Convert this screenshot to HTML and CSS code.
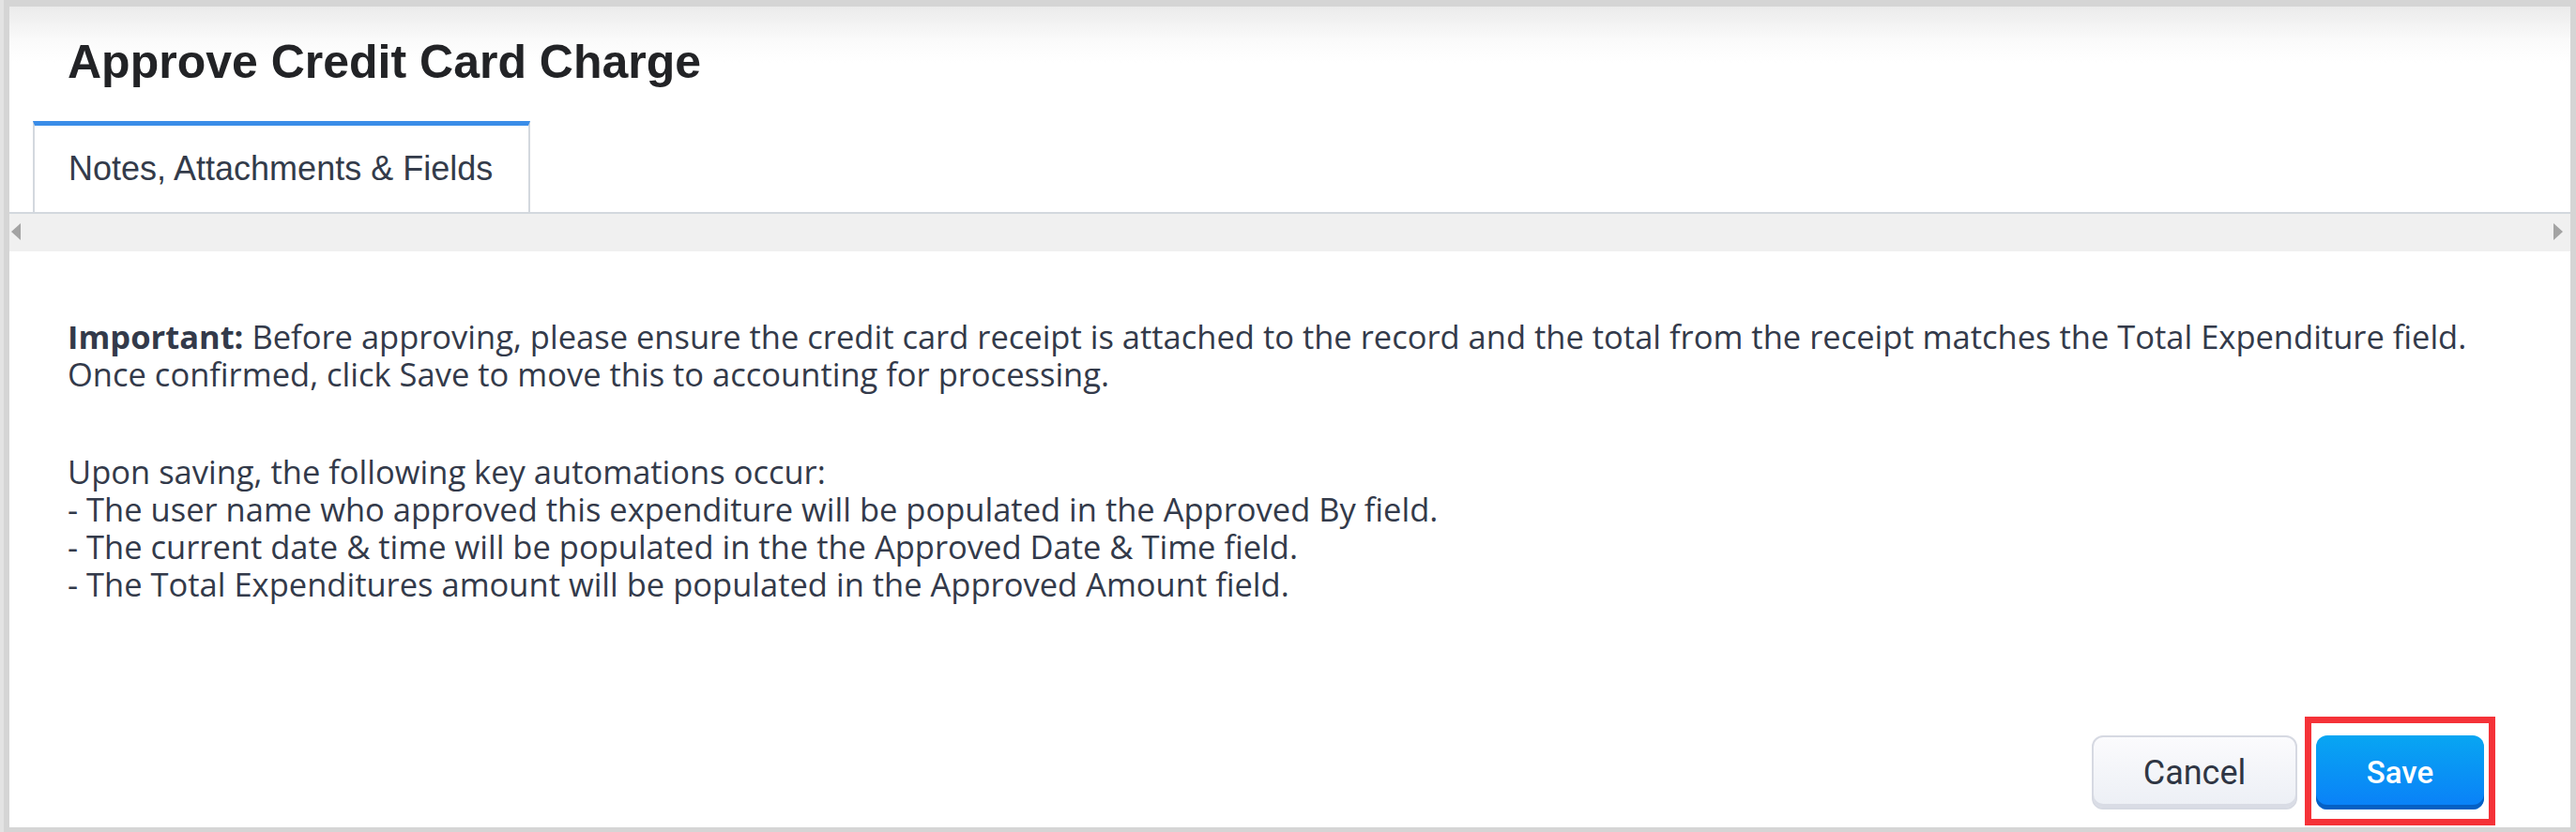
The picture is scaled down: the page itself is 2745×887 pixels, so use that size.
FILE: index.html
```html
<!DOCTYPE html>
<html>
<head>
<meta charset="utf-8">
<title>Approve Credit Card Charge</title>
<link rel="stylesheet" href="styles.css">
</head>
<body>
<div class="panel">
  <header class="header">
    <h1 class="title">Approve Credit Card Charge</h1>
  </header>
  <nav class="tabs">
    <div class="tab active">Notes, Attachments &amp; Fields</div>
  </nav>
  <div class="scroller">
    <span class="arrow arrow-left"></span>
    <span class="arrow arrow-right"></span>
  </div>
  <main class="content">
    <p class="para"><strong>Important:</strong> Before approving, please ensure the credit card receipt is attached to the record and the total from the receipt matches the Total Expenditure field.<br>Once confirmed, click Save to move this to accounting for processing.</p>
    <p class="para para-second">Upon saving, the following key automations occur:<br>- The user name who approved this expenditure will be populated in the Approved By field.<br>- The current date &amp; time will be populated in the the Approved Date &amp; Time field.<br>- The Total Expenditures amount will be populated in the Approved Amount field.</p>
  </main>
  <footer class="footer">
    <button class="btn btn-cancel">Cancel</button>
    <span class="highlight"><button class="btn btn-save">Save</button></span>
  </footer>
</div>
</body>
</html>
```
FILE: styles.css
```css
* { box-sizing: border-box; }
html, body { height: 100%; }
body {
  margin: 0;
  background: #d5d5d5;
  border-left: 4px solid #e3e3e3;
  padding: 7px 6px 5px 6px;
  font-family: "Liberation Sans", Arial, sans-serif;
  overflow: hidden;
}
.panel {
  height: 875px;
  background: #ffffff;
  display: flex;
  flex-direction: column;
}
.header {
  height: 122px;
  padding: 29px 0 0 62px;
  background: linear-gradient(to bottom, #ebebeb 0px, #fafafa 35px, #ffffff 60px);
}
.title {
  margin: 0;
  font-size: 50px;
  line-height: 60px;
  font-weight: 700;
  color: #222326;
  letter-spacing: 0;
}
.tabs {
  display: flex;
  padding-left: 25px;
  border-bottom: 2px solid #d3d8de;
}
.tab {
  border-top: 5px solid #3a8de8;
  border-left: 2px solid #d3d8de;
  border-right: 2px solid #d3d8de;
  padding: 24px 37px 24px 36px;
  font-size: 36px;
  line-height: 44px;
  color: #333b4a;
  background: #fff;
  width: 530px;
}
.scroller {
  height: 40px;
  background: #f0f0f0;
  display: flex;
  justify-content: space-between;
  align-items: center;
  padding: 0 8px 2px 2px;
}
.arrow {
  width: 0;
  height: 0;
  border-top: 9px solid transparent;
  border-bottom: 9px solid transparent;
}
.arrow-left { border-right: 10px solid #a3a3a3; }
.arrow-right { border-left: 10px solid #a3a3a3; }
.content {
  padding: 71px 40px 0 62px;
}
.para {
  margin: 0;
  font-family: "Open Sans", "Liberation Sans", sans-serif;
  font-size: 34.5px;
  line-height: 40px;
  color: #333a4a;
  white-space: nowrap;
}
.para strong { font-weight: 700; }
.para-second { margin-top: 64px; }
.footer {
  margin-top: auto;
  display: flex;
  justify-content: flex-end;
  gap: 20px;
  padding: 0 92px 19px 0;
}
.btn {
  height: 79px;
  border-radius: 12px;
  font-family: Roboto, "Liberation Sans", sans-serif;
  cursor: pointer;
}
.btn-cancel {
  width: 219px;
  font-size: 36px;
  color: #2f3644;
  background: linear-gradient(to bottom, #fbfbfd, #eceff5);
  border: 2px solid #d6d9e2;
  box-shadow: inset 0 -4px 0 #d9dce5;
}
.highlight {
  position: relative;
  display: inline-flex;
}
.highlight::after {
  content: "";
  position: absolute;
  top: -20px;
  left: -12px;
  right: -12px;
  bottom: -17px;
  border: 7px solid #f53238;
  pointer-events: none;
}
.btn-save {
  width: 179px;
  font-size: 33px;
  font-weight: 500;
  color: #ffffff;
  border: none;
  background: linear-gradient(to bottom, #08a6f2, #0a7ff8);
  box-shadow: inset 0 -5px 0 #0560c4;
}
```
